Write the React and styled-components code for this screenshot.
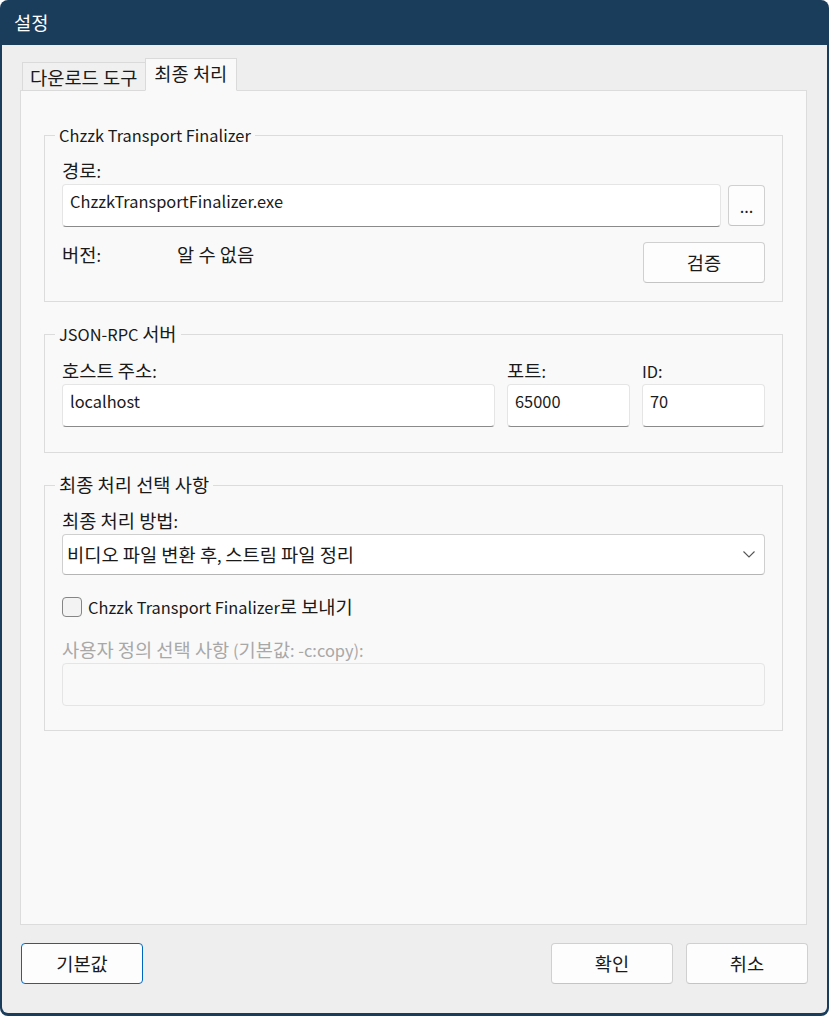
import React, { useState } from 'react';
import styled, { createGlobalStyle, css } from 'styled-components';

const GlobalStyle = createGlobalStyle`
  html, body {
    margin: 0;
    padding: 0;
    background: #ffffff;
  }
  * {
    box-sizing: border-box;
  }
  body {
    font-family: "Noto Sans CJK KR", "Noto Sans", sans-serif;
    font-size: 16.4px;
    color: #1a1a1a;
  }
`;

// Hangul runs render a bit larger than the Latin text, like Malgun Gothic next to Segoe UI
const Hangul = styled.span`
  font-size: 1.14em;
  line-height: 1;
`;

const T = ({ children }) => {
  const parts = String(children).split(/([가-힣]+(?:\s+[가-힣]+)*)/);
  return parts.map((part, i) =>
    /[가-힣]/.test(part) ? <Hangul key={i}>{part}</Hangul> : part
  );
};

const Window = styled.div`
  width: 829px;
  height: 1016px;
  display: flex;
  flex-direction: column;
  background: #1b3d5c;
  border-radius: 8px;
  padding: 0 2px 3px 2px;
  overflow: hidden;
`;

const TitleBar = styled.div`
  height: 45px;
  display: flex;
  align-items: center;
  padding-left: 12px;
  color: #ffffff;
  line-height: 22px;
`;

const Body = styled.div`
  flex: 1;
  display: flex;
  flex-direction: column;
  background: #eeeeee;
  border-radius: 0 0 6px 6px;
  padding: 13px 20px 0 18px;
`;

const TabRow = styled.div`
  display: flex;
  align-items: flex-end;
  padding-left: 2px;
  position: relative;
  z-index: 1;
  margin-bottom: -1px;
`;

const Tab = styled.div`
  display: flex;
  align-items: center;
  line-height: 22px;
  border: 1px solid #dadada;
  ${p => p.$active
    ? css`
      height: 33px;
      padding: 0 9px 2px 8px;
      background: #f9f9f9;
      border-bottom-color: #f9f9f9;
    `
    : css`
      height: 29px;
      padding: 1px 8px 0 7px;
      background: #f0f0f0;
      border-right: none;
      border-bottom-color: #dadada;
    `}
`;

const Panel = styled.div`
  flex: 1;
  background: #f9f9f9;
  border: 1px solid #dcdcdc;
  padding: 33px 23px 0 23px;
  display: flex;
  flex-direction: column;
  gap: 21px;
`;

const Group = styled.fieldset`
  margin: 0;
  border: 1px solid #dcdcdc;
  padding: ${p => p.$top || 14}px 17px ${p => p.$bottom}px 17px;
  min-width: 0;
`;

const Legend = styled.legend`
  padding: 0 4px;
  margin-left: -7px;
  line-height: 22px;
`;

const Label = styled.div`
  line-height: 22px;
  margin-bottom: 2px;
  color: ${p => (p.$disabled ? '#a8a8a8' : '#1a1a1a')};
`;

const Row = styled.div`
  display: flex;
  align-items: ${p => p.$align || 'center'};
  gap: ${p => p.$gap || 0}px;
  margin-top: ${p => p.$top || 0}px;
`;

const Input = styled.div`
  flex: 1 1 auto;
  min-width: 0;
  height: 43px;
  background: ${p => (p.$disabled ? '#f9f9f9' : '#ffffff')};
  border: 1px solid #e5e5e5;
  border-bottom-color: ${p => (p.$disabled ? '#e5e5e5' : '#8a8a8a')};
  border-radius: 4px;
  padding: 5px 7px;
  line-height: 22px;
  white-space: nowrap;
`;

const Grid = styled.div`
  display: grid;
  grid-template-columns: 1fr 123px 123px;
  column-gap: 12px;
`;

const Field = styled.div`
  display: flex;
  flex-direction: column;
`;

const Button = styled.button`
  width: ${p => p.$w}px;
  height: ${p => p.$h || 41}px;
  background: #fdfdfd;
  border: 1px solid ${p => (p.$primary ? '#0067c0' : '#d0d0d0')};
  border-bottom-color: ${p => (p.$primary ? '#0067c0' : '#c4c4c4')};
  border-radius: 4px;
  font: inherit;
  line-height: 22px;
  color: #1a1a1a;
  padding: 0;
  flex-shrink: 0;
  cursor: pointer;
`;

const Version = styled.div`
  display: flex;
  flex: 1;
  line-height: 22px;
  margin-top: 2px;
`;

const VersionLabel = styled.span`
  width: 115px;
`;

const Select = styled.div`
  height: 41px;
  background: #ffffff;
  border: 1px solid #cfcfcf;
  border-bottom-color: #b5b5b5;
  border-radius: 4px;
  display: flex;
  align-items: center;
  justify-content: space-between;
  padding: 0 9px 0 4px;
  line-height: 22px;
`;

const CheckRow = styled.label`
  display: flex;
  align-items: center;
  gap: 6px;
  margin-top: 21px;
  line-height: 22px;
  cursor: pointer;
`;

const Box = styled.span`
  width: 20px;
  height: 20px;
  border: 1px solid #858585;
  border-radius: 4px;
  background: ${p => (p.$checked ? '#0067c0' : '#f3f3f3')};
  display: inline-flex;
  align-items: center;
  justify-content: center;
`;

const Footer = styled.div`
  display: flex;
  align-items: flex-start;
  justify-content: space-between;
  padding: 18px 0 0 1px;
  margin-right: -1px;
  height: 88px;
`;

const FooterRight = styled.div`
  display: flex;
  gap: 13px;
`;

export default function App() {
  const [send, setSend] = useState(false);

  return (
    <>
      <GlobalStyle />
      <Window>
        <TitleBar><T>설정</T></TitleBar>
        <Body>
          <TabRow>
            <Tab><T>다운로드 도구</T></Tab>
            <Tab $active><T>최종 처리</T></Tab>
          </TabRow>
          <Panel>
            <Group $bottom={18}>
              <Legend>Chzzk Transport Finalizer</Legend>
              <Label><T>경로:</T></Label>
              <Row $gap={7}>
                <Input>ChzzkTransportFinalizer.exe</Input>
                <Button $w={37}>...</Button>
              </Row>
              <Row $top={15} $align="flex-start">
                <Version>
                  <VersionLabel><T>버전:</T></VersionLabel>
                  <span><T>알 수 없음</T></span>
                </Version>
                <Button $w={122}><T>검증</T></Button>
              </Row>
            </Group>

            <Group $top={15} $bottom={25}>
              <Legend>JSON-RPC <T>서버</T></Legend>
              <Grid>
                <Field>
                  <Label><T>호스트 주소:</T></Label>
                  <Input>localhost</Input>
                </Field>
                <Field>
                  <Label><T>포트:</T></Label>
                  <Input>65000</Input>
                </Field>
                <Field>
                  <Label>ID:</Label>
                  <Input>70</Input>
                </Field>
              </Grid>
            </Group>

            <Group $bottom={24}>
              <Legend><T>최종 처리 선택 사항</T></Legend>
              <Label><T>최종 처리 방법:</T></Label>
              <Select>
                <span><T>비디오 파일 변환 후, 스트림 파일 정리</T></span>
                <svg width="12" height="7" viewBox="0 0 12 7" fill="none">
                  <path d="M0.5 0.5 L6 6 L11.5 0.5" stroke="#555" strokeWidth="1.1" />
                </svg>
              </Select>
              <CheckRow onClick={() => setSend(!send)}>
                <Box $checked={send} />
                <span><T>Chzzk Transport Finalizer로 보내기</T></span>
              </CheckRow>
              <Row $top={21}>
                <Label $disabled><T>사용자 정의 선택 사항 (기본값: -c:copy):</T></Label>
              </Row>
              <Input $disabled />
            </Group>
          </Panel>
          <Footer>
            <Button $w={122} $primary><T>기본값</T></Button>
            <FooterRight>
              <Button $w={122}><T>확인</T></Button>
              <Button $w={122}><T>취소</T></Button>
            </FooterRight>
          </Footer>
        </Body>
      </Window>
    </>
  );
}
